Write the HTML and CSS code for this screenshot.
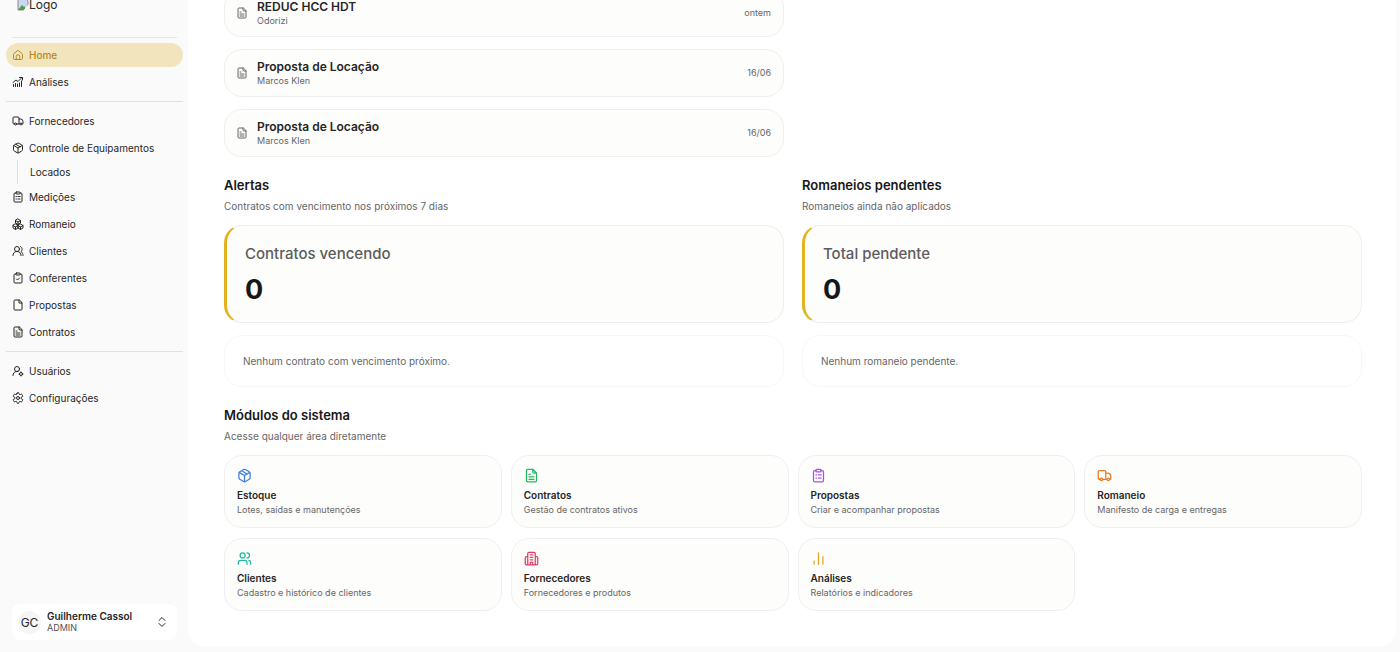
FILE: index.html
```html
<!DOCTYPE html>
<html lang="pt-BR">
<head>
    <meta charset="UTF-8">
    <meta name="viewport" content="width=device-width, initial-scale=1.0">
    <title>Home</title>
    <link rel="stylesheet" href="styles.css">
</head>
<body>
    <svg class="sprite" aria-hidden="true">
        <symbol id="home" viewBox="0 0 24 24"><path d="M3 11a2 2 0 0 1 .8-1.6l6.9-6a2 2 0 0 1 2.6 0l6.9 6A2 2 0 0 1 21 11v8a2 2 0 0 1-2 2H5a2 2 0 0 1-2-2z"/><path d="M8.500 21v-6a3.500 3.500 0 0 1 7 0v6"/></symbol>
        <symbol id="growth" viewBox="0 0 24 24"><path d="M3 21v-4M7 21v-6M11 21v-5M15 21v-7M19 21V10M2 13l6-5 4 3 8-8M15 3h6v5"/></symbol>
        <symbol id="truck" viewBox="0 0 24 24"><path d="M5 18H4a2 2 0 0 1-2-2V6a2 2 0 0 1 2-2h8a2 2 0 0 1 2 2v12H9M14 8h3a5 5 0 0 1 5 5v4a1 1 0 0 1-1 1M14 18h1"/><circle cx="7" cy="18" r="2"/><circle cx="18" cy="18" r="2"/></symbol>
        <symbol id="box" viewBox="0 0 24 24"><path d="M10.500 2.500a3 3 0 0 1 3 0l6 3.500A3 3 0 0 1 21 8.500v7a3 3 0 0 1-1.500 2.500l-6 3.500a3 3 0 0 1-3 0l-6-3.500A3 3 0 0 1 3 15.500v-7A3 3 0 0 1 4.500 6zM3.500 7l8.500 5 8.500-5M12 12v10M7.500 4.500l8.500 5"/></symbol>
        <symbol id="clipboard" viewBox="0 0 24 24"><path d="M8 4H6a2 2 0 0 0-2 2v14a2 2 0 0 0 2 2h12a2 2 0 0 0 2-2V6a2 2 0 0 0-2-2h-2"/><rect x="8" y="2" width="8" height="4" rx="1"/><path d="M8 11h1M12 11h4M8 16h1M12 16h4"/></symbol>
        <symbol id="boxes" viewBox="0 0 24 24"><path d="M12 2l5 3v5l-5 3-5-3V5zM7 5l5 3 5-3M12 8v5M7 12l5 3v5l-5 3-5-3v-5zM2 15l5 3 5-3M7 18v5M17 12l5 3v5l-5 3-5-3v-5zM12 15l5 3 5-3M17 18v5"/></symbol>
        <symbol id="people" viewBox="0 0 24 24"><circle cx="10" cy="8" r="5"/><path d="M2 21c0-5 3-8 8-8s8 3 8 8M17 3c4 2 4 7 1 10 3 2 4 5 4 8"/></symbol>
        <symbol id="clipboard-check" viewBox="0 0 24 24"><path d="M8 4H6a2 2 0 0 0-2 2v14a2 2 0 0 0 2 2h12a2 2 0 0 0 2-2V6a2 2 0 0 0-2-2h-2"/><rect x="8" y="2" width="8" height="4" rx="1"/><path d="M9 14l2 2 4-4"/></symbol>
        <symbol id="file" viewBox="0 0 24 24"><path d="M14 2H6a2 2 0 0 0-2 2v16a2 2 0 0 0 2 2h12a2 2 0 0 0 2-2V8zM14 2v6h6"/></symbol>
        <symbol id="file-text" viewBox="0 0 24 24"><path d="M14 2H6a2 2 0 0 0-2 2v16a2 2 0 0 0 2 2h12a2 2 0 0 0 2-2V8zM14 2v4a2 2 0 0 0 2 2h4M8 10h2M8 14h8M8 18h8"/></symbol>
        <symbol id="user-cog" viewBox="0 0 24 24"><circle cx="10" cy="8" r="5"/><path d="M2 21c0-5 3-8 8-8h2"/><circle cx="18" cy="18" r="3"/><path d="M18 14v1M18 21v1M14 18h1M21 18h1"/></symbol>
        <symbol id="gear" viewBox="0 0 24 24"><path d="M10 3a2 2 0 0 1 4 0 2 2 0 0 0 3 2 2 2 0 0 1 3 0l1 2a2 2 0 0 1-1 3 2 2 0 0 0 0 4 2 2 0 0 1 1 3l-1 2a2 2 0 0 1-3 0 2 2 0 0 0-3 2 2 2 0 0 1-4 0 2 2 0 0 0-3-2 2 2 0 0 1-3 0l-1-2a2 2 0 0 1 1-3 2 2 0 0 0 0-4 2 2 0 0 1-1-3l1-2a2 2 0 0 1 3 0 2 2 0 0 0 3-2z"/><circle cx="12" cy="12" r="3"/></symbol>
        <symbol id="users" viewBox="0 0 24 24"><circle cx="9" cy="7" r="4"/><path d="M2 21v-2a4 4 0 0 1 4-4h6a4 4 0 0 1 4 4v2M16 3a4 4 0 0 1 0 8M19 15a4 4 0 0 1 3 4v2"/></symbol>
        <symbol id="building" viewBox="0 0 24 24"><path d="M6 22V4a2 2 0 0 1 2-2h8a2 2 0 0 1 2 2v18M6 9H4a2 2 0 0 0-2 2v9a2 2 0 0 0 2 2h16a2 2 0 0 0 2-2v-9a2 2 0 0 0-2-2h-2M10 6h4M10 10h4M10 14h4M10 22v-4h4v4"/></symbol>
        <symbol id="bars" viewBox="0 0 24 24"><path d="M5 21v-5M12 21V3M19 21V9"/></symbol>
        <symbol id="sort" viewBox="0 0 24 24"><path d="M6 9l6-6 6 6M6 15l6 6 6-6"/></symbol>
    </svg>

    <aside class="sidebar">
        <div class="logo">
            <svg class="logo-icon" viewBox="0 0 12 14" aria-hidden="true">
                <path d="M1 1h7l3 3v9H1z" fill="#c9d8f0" stroke="#8a8a8a"/>
                <path d="M1 13l4-5 2 2 1-1v4z" fill="#4f9d45"/>
                <path d="M6 14l6-7v7z" fill="#fafafa"/>
            </svg>
            <span>Logo</span>
        </div>
        <nav>
            <div class="nav-group">
                <a class="nav-item active" href="#"><svg class="icon"><use href="#home"/></svg>Home</a>
                <a class="nav-item" href="#"><svg class="icon"><use href="#growth"/></svg>Análises</a>
            </div>
            <div class="nav-group">
                <a class="nav-item" href="#"><svg class="icon"><use href="#truck"/></svg>Fornecedores</a>
                <a class="nav-item" href="#"><svg class="icon"><use href="#box"/></svg>Controle de Equipamentos</a>
                <div class="submenu"><a href="#">Locados</a></div>
                <a class="nav-item" href="#"><svg class="icon"><use href="#clipboard"/></svg>Medições</a>
                <a class="nav-item" href="#"><svg class="icon"><use href="#boxes"/></svg>Romaneio</a>
                <a class="nav-item" href="#"><svg class="icon"><use href="#people"/></svg>Clientes</a>
                <a class="nav-item" href="#"><svg class="icon"><use href="#clipboard-check"/></svg>Conferentes</a>
                <a class="nav-item" href="#"><svg class="icon"><use href="#file"/></svg>Propostas</a>
                <a class="nav-item" href="#"><svg class="icon"><use href="#file-text"/></svg>Contratos</a>
            </div>
            <div class="nav-group">
                <a class="nav-item" href="#"><svg class="icon"><use href="#user-cog"/></svg>Usuários</a>
                <a class="nav-item" href="#"><svg class="icon"><use href="#gear"/></svg>Configurações</a>
            </div>
        </nav>
        <button type="button" class="user">
            <span class="avatar">GC</span>
            <span class="user-info">
                <span class="user-name">Guilherme Cassol</span>
                <span class="user-role">ADMIN</span>
            </span>
            <svg class="icon"><use href="#sort"/></svg>
        </button>
    </aside>

    <main>
        <div class="columns">
            <div class="proposals">
                <a class="card proposal" href="#">
                    <svg class="icon"><use href="#file-text"/></svg>
                    <div class="proposal-info"><h3>REDUC HCC HDT</h3><p>Odorizi</p></div>
                    <time>ontem</time>
                </a>
                <a class="card proposal" href="#">
                    <svg class="icon"><use href="#file-text"/></svg>
                    <div class="proposal-info"><h3>Proposta de Locação</h3><p>Marcos Klen</p></div>
                    <time>16/06</time>
                </a>
                <a class="card proposal" href="#">
                    <svg class="icon"><use href="#file-text"/></svg>
                    <div class="proposal-info"><h3>Proposta de Locação</h3><p>Marcos Klen</p></div>
                    <time>16/06</time>
                </a>
            </div>
        </div>

        <div class="columns">
            <section>
                <h2>Alertas</h2>
                <p class="subtitle">Contratos com vencimento nos próximos 7 dias</p>
                <div class="card stat">
                    <p class="stat-label">Contratos vencendo</p>
                    <p class="stat-value">0</p>
                </div>
                <div class="card empty">Nenhum contrato com vencimento próximo.</div>
            </section>
            <section>
                <h2>Romaneios pendentes</h2>
                <p class="subtitle">Romaneios ainda não aplicados</p>
                <div class="card stat">
                    <p class="stat-label">Total pendente</p>
                    <p class="stat-value">0</p>
                </div>
                <div class="card empty">Nenhum romaneio pendente.</div>
            </section>
        </div>

        <section>
            <h2>Módulos do sistema</h2>
            <p class="subtitle">Acesse qualquer área diretamente</p>
            <div class="modules">
                <a class="card module" href="#"><svg class="icon blue"><use href="#box"/></svg><h3>Estoque</h3><p>Lotes, saídas e manutenções</p></a>
                <a class="card module" href="#"><svg class="icon green"><use href="#file-text"/></svg><h3>Contratos</h3><p>Gestão de contratos ativos</p></a>
                <a class="card module" href="#"><svg class="icon purple"><use href="#clipboard"/></svg><h3>Propostas</h3><p>Criar e acompanhar propostas</p></a>
                <a class="card module" href="#"><svg class="icon orange"><use href="#truck"/></svg><h3>Romaneio</h3><p>Manifesto de carga e entregas</p></a>
                <a class="card module" href="#"><svg class="icon teal"><use href="#users"/></svg><h3>Clientes</h3><p>Cadastro e histórico de clientes</p></a>
                <a class="card module" href="#"><svg class="icon rose"><use href="#building"/></svg><h3>Fornecedores</h3><p>Fornecedores e produtos</p></a>
                <a class="card module" href="#"><svg class="icon amber"><use href="#bars"/></svg><h3>Análises</h3><p>Relatórios e indicadores</p></a>
            </div>
        </section>
    </main>
</body>
</html>
```
FILE: styles.css
```css
* {
    box-sizing: border-box;
    margin: 0;
    padding: 0;
}
body {
    display: flex;
    height: 100vh;
    overflow: hidden;
    font-family: Inter, sans-serif;
    font-size: 10px;
    color: #262626;
    background: #fafafa;
}
a {
    color: inherit;
    text-decoration: none;
}
.sprite {
    display: none;
}
.icon {
    width: 12px;
    height: 12px;
    flex-shrink: 0;
    fill: none;
    stroke: currentColor;
    stroke-width: 2;
    stroke-linecap: round;
    stroke-linejoin: round;
}

/* Sidebar */
.sidebar {
    width: 188px;
    flex-shrink: 0;
    display: flex;
    flex-direction: column;
    padding: 0 5px 12px 6px;
}
.logo {
    display: flex;
    align-items: flex-end;
    height: 38px;
    margin: 0 6px;
    padding: 0 5px 26px;
    border-bottom: 1px solid #e5e5e5;
    font-size: 12px;
    line-height: 12px;
}
.logo-icon {
    width: 12px;
    height: 14px;
}
nav {
    flex: 1;
    padding-top: 5px;
}
.nav-group {
    display: flex;
    flex-direction: column;
    gap: 3px;
}
.nav-group + .nav-group {
    margin-top: 7px;
    padding-top: 7px;
    border-top: 1px solid #e0e0e0;
}
.nav-item {
    display: flex;
    align-items: center;
    gap: 5px;
    height: 24px;
    padding: 0 6px;
    border-radius: 12px;
}
.nav-item.active {
    font-weight: 500;
    color: #b48a1a;
    background: #f2e5bd;
}
.submenu {
    margin: -3px 0 -2px 11px;
    padding-left: 12px;
    border-left: 1px solid #dedede;
    line-height: 24px;
}
.user {
    display: flex;
    align-items: center;
    gap: 6px;
    height: 36px;
    margin: 0 6px;
    padding: 0 9px 0 6px;
    border: 0;
    border-radius: 8px;
    background: #fff;
    color: inherit;
    font-family: inherit;
    text-align: left;
}
.avatar {
    width: 23px;
    height: 23px;
    border-radius: 50%;
    background: #f5f5f5;
    font-size: 12px;
    line-height: 23px;
    text-align: center;
}
.user-info {
    flex: 1;
}
.user-name,
.user-role {
    display: block;
    font-size: 10px;
    line-height: 12px;
}
.user-name {
    font-weight: 600;
}
.user-role {
    font-size: 9px;
    color: #525252;
}

/* Content */
main {
    flex: 1;
    display: flex;
    flex-direction: column;
    justify-content: flex-end;
    gap: 18px;
    margin: 0 4px 6px 0;
    padding: 0 34px 35px 36px;
    border-radius: 0 0 16px 16px;
    background: #fff;
}
.columns {
    display: grid;
    grid-template-columns: 1fr 1fr;
    gap: 18px;
}
.card {
    border: 1px solid #efefef;
    border-radius: 18px;
    background: #fdfdfb;
}
h2 {
    font-size: 13px;
    font-weight: 600;
    line-height: 20px;
    color: #171717;
}
.subtitle {
    margin-bottom: 10px;
    padding-top: 2px;
    line-height: 18px;
    color: #666;
}
.proposals {
    display: flex;
    flex-direction: column;
    gap: 12px;
}
.proposal {
    display: flex;
    align-items: center;
    gap: 9px;
    height: 48px;
    padding: 0 12px 0 11px;
    color: #666;
}
.proposal-info {
    flex: 1;
}
.proposal h3 {
    font-size: 12px;
    font-weight: 600;
    line-height: 16px;
    color: #262626;
}
.proposal p,
.proposal time {
    font-size: 9px;
    line-height: 12px;
}
.stat {
    padding: 18px 18px 16px;
    border-left: 3px solid #e2b31f;
}
.stat-label {
    font-size: 15px;
    font-weight: 500;
    line-height: 20px;
    color: #5c5c5c;
}
.stat-value {
    margin-top: 10px;
    font-size: 27px;
    font-weight: 700;
    line-height: 32px;
    color: #171717;
}
.empty {
    margin-top: 12px;
    padding: 16px 18px;
    border-color: #f7f7f7;
    background: #fff;
    line-height: 18px;
    color: #666;
}
.modules {
    display: grid;
    grid-template-columns: repeat(4, 1fr);
    gap: 10px 9px;
}
.module {
    padding: 12px 12px 11px;
}
.module .icon {
    display: block;
    width: 15px;
    height: 15px;
}
.module h3 {
    margin-top: 4px;
    font-size: 10px;
    font-weight: 600;
    line-height: 16px;
}
.module p {
    font-size: 9px;
    line-height: 13px;
    color: #666;
}
.blue { color: #3b7fe0; }
.green { color: #22b860; }
.purple { color: #a855d8; }
.orange { color: #ea7a20; }
.teal { color: #20b8a0; }
.rose { color: #dc3f68; }
.amber { color: #e0a52a; }
```
